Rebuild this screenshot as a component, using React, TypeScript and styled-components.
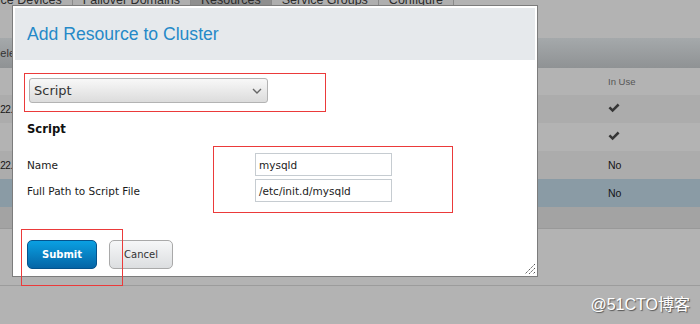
import styled, { createGlobalStyle } from "styled-components";

const GlobalStyle = createGlobalStyle`
  html, body {
    margin: 0;
    padding: 0;
    background: #b3b3b3;
  }
  #root {
    position: relative;
    width: 700px;
    height: 324px;
    overflow: hidden;
    background: #b3b3b3;
    font-family: "DejaVu Sans", sans-serif;
  }
`;

const Page = styled.div`
  display: flex;
  flex-direction: column;
  width: 100%;
`;

const TabBar = styled.ul`
  list-style: none;
  display: flex;
  margin: -10px 0 0 -31px;
  padding: 0;
  height: 20px;
`;

const Tab = styled.li<{ $active?: boolean }>`
  height: 20px;
  line-height: 20px;
  padding: 0 10px;
  font-family: "Liberation Sans", Arial, sans-serif;
  font-size: 12.5px;
  color: #2b2b2b;
  white-space: nowrap;
  background: ${(p) => (p.$active ? "#8f8f8f" : "#afafaf")};
  border-right: 1px solid #8a8a8a;
`;

const Toolbar = styled.div`
  margin-top: 28px;
  height: 30px;
  display: flex;
  align-items: center;
  background: linear-gradient(#a5a9ab, #8f9294);
  font-family: "Liberation Sans", Arial, sans-serif;
  font-size: 11px;
  color: #333;

  span {
    margin-left: -7px;
  }
`;

const Row = styled.div<{ $tone: "head" | "dark" | "light" | "selected"; $h: number }>`
  display: grid;
  grid-template-columns: 608px 1fr;
  align-items: center;
  height: ${(p) => p.$h}px;
  background: ${(p) =>
    p.$tone === "dark"
      ? "#acacac"
      : p.$tone === "selected"
      ? "#8a9ba5"
      : "#b3b3b3"};
  font-family: "Liberation Sans", Arial, sans-serif;
  font-size: 10.5px;
  color: #151515;
`;

const FirstCell = styled.div`
  margin-left: -5px;
  white-space: nowrap;
  overflow: hidden;
  font-size: 10px;
  letter-spacing: -0.4px;
`;

const HeadCell = styled.div`
  font-size: 9.5px;
  color: #555;
`;

const TableFooter = styled.div`
  height: 21px;
  background: #a3a3a3;
  border-bottom: 1px solid #999;
`;

const PageBottom = styled.div`
  height: 56px;
  border-bottom: 1px solid #9c9c9c;
`;

const Dialog = styled.div`
  position: absolute;
  left: 12px;
  top: 5px;
  width: 526px;
  height: 272px;
  box-sizing: border-box;
  border: 1px solid #7c7c7c;
  padding: 2px;
  background: #fff;
  display: flex;
  flex-direction: column;
`;

const DialogHeader = styled.div`
  height: 52px;
  flex-shrink: 0;
  background: #e6e9ec;
  display: flex;
  align-items: center;
  padding-left: 12px;

  h1 {
    margin: 0;
    font-family: "Liberation Sans", Arial, sans-serif;
    font-weight: normal;
    font-size: 17.6px;
    color: #2589c8;
  }
`;

const DialogBody = styled.div`
  padding: 13px 12px 0 12px;
  display: flex;
  flex-direction: column;
  align-items: flex-start;
`;

const Mark = styled.div`
  box-sizing: border-box;
  border: 1px solid #eb3a3a;
`;

const SelectFrame = styled(Mark)`
  margin-left: -3px;
  width: 302px;
  height: 39px;
  padding: 4px;
`;

const Overlay = styled(Mark)<{ $x: number; $y: number; $w: number; $h: number }>`
  position: absolute;
  left: ${(p) => p.$x}px;
  top: ${(p) => p.$y}px;
  width: ${(p) => p.$w}px;
  height: ${(p) => p.$h}px;
  pointer-events: none;
`;

const SelectBox = styled.div`
  box-sizing: border-box;
  width: 239px;
  height: 25px;
  border: 1px solid #b3b3b3;
  border-radius: 3px;
  background: linear-gradient(#f8f8f8, #dcdcdc);
  display: flex;
  align-items: center;
  justify-content: space-between;
  padding: 0 5px 0 4px;
  font-size: 13px;
  color: #333;
`;

const Heading = styled.h2`
  margin: 9px 0 0 0;
  line-height: 16px;
  font-size: 11.6px;
  font-weight: bold;
  color: #111;
`;

const Form = styled.div`
  margin-top: 16px;
  display: grid;
  grid-template-columns: 228px 137px;
  grid-auto-rows: 23px;
  row-gap: 3px;
  align-items: center;
  font-size: 10.5px;
  color: #1a1a1a;
`;

const Input = styled.div`
  box-sizing: border-box;
  height: 23px;
  border: 1px solid #c6ccd1;
  padding-left: 3px;
  display: flex;
  align-items: center;
  font-size: 10.5px;
  color: #222;
`;

const Actions = styled.div`
  margin-top: 38px;
  display: flex;
  gap: 12px;
`;

const Button = styled.button<{ $primary?: boolean }>`
  box-sizing: border-box;
  height: 29px;
  width: ${(p) => (p.$primary ? 70 : 64)}px;
  border-radius: 5px;
  border: 1px solid ${(p) => (p.$primary ? "#05538c" : "#a9a9a9")};
  background: ${(p) =>
    p.$primary
      ? "linear-gradient(#0aa0e2, #0565a6)"
      : "linear-gradient(#f6f7f8, #dcdee0)"};
  color: ${(p) => (p.$primary ? "#fff" : "#333")};
  font-family: "DejaVu Sans", sans-serif;
  font-size: 10px;
  font-weight: ${(p) => (p.$primary ? "bold" : "normal")};
  padding: 0;
`;

const Grip = styled.svg`
  position: absolute;
  right: 1px;
  bottom: 1px;
`;

const Watermark = styled.div`
  position: absolute;
  right: 10px;
  bottom: 9px;
  font-family: "Liberation Sans", "Noto Sans CJK SC", sans-serif;
  font-size: 16px;
  color: #fff;
  text-shadow: 1px 1px 1px #555;
`;

const Check = () => (
  <svg width="12" height="10" viewBox="0 0 12 10">
    <path d="M0.5 5.2 L2.3 3.4 L4.6 5.7 L9.7 0.6 L11.5 2.4 L4.6 9.3 Z" fill="#353535" />
  </svg>
);

const rows: { tone: "dark" | "light" | "selected"; first: string; used: boolean }[] = [
  { tone: "dark", first: "122.10", used: true },
  { tone: "light", first: "", used: true },
  { tone: "dark", first: "122.11", used: false },
  { tone: "selected", first: "", used: false },
];

const App = () => {
  return (
    <>
      <GlobalStyle />
      <Page>
        <TabBar>
          <Tab>Fence Devices</Tab>
          <Tab>Failover Domains</Tab>
          <Tab $active>Resources</Tab>
          <Tab>Service Groups</Tab>
          <Tab>Configure</Tab>
        </TabBar>
        <Toolbar>
          <span>Select</span>
        </Toolbar>
        <Row $tone="head" $h={27}>
          <FirstCell />
          <HeadCell>In Use</HeadCell>
        </Row>
        {rows.map((r, i) => (
          <Row key={i} $tone={r.tone} $h={28}>
            <FirstCell>{r.first}</FirstCell>
            <div>{r.used ? <Check /> : "No"}</div>
          </Row>
        ))}
        <TableFooter />
        <PageBottom />
      </Page>

      <Dialog>
        <DialogHeader>
          <h1>Add Resource to Cluster</h1>
        </DialogHeader>
        <DialogBody>
          <SelectFrame>
            <SelectBox>
              <span>Script</span>
              <svg width="10" height="6" viewBox="0 0 10 6">
                <path d="M1 1 L5 5 L9 1" stroke="#666" strokeWidth="1.4" fill="none" />
              </svg>
            </SelectBox>
          </SelectFrame>
          <Heading>Script</Heading>
          <Form>
            <span>Name</span>
            <Input>mysqld</Input>
            <span>Full Path to Script File</span>
            <Input>/etc/init.d/mysqld</Input>
          </Form>
          <Actions>
            <Button $primary>Submit</Button>
            <Button>Cancel</Button>
          </Actions>
        </DialogBody>
        <Overlay $x={200} $y={140} $w={240} $h={67} />
        <Overlay $x={8} $y={223} $w={102} $h={57} />
        <Grip width="12" height="12" viewBox="0 0 12 12">
          <path d="M11 1 L1 11 M11 5 L5 11 M11 9 L9 11" stroke="#555" strokeWidth="1" strokeDasharray="1.5 0.8" />
        </Grip>
      </Dialog>

      <Watermark>@51CTO博客</Watermark>
    </>
  );
};

export default App;
